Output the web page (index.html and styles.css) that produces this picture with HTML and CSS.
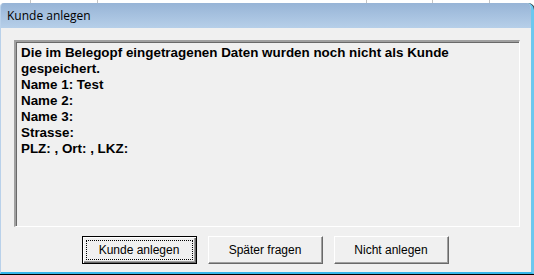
FILE: index.html
```html
<!DOCTYPE html>
<html lang="de">
<head>
<meta charset="utf-8">
<link rel="stylesheet" href="styles.css">
</head>
<body>
<div class="window">
  <div class="titlebar"><span class="title">Kunde anlegen</span></div>
  <div class="client">
    <div class="panel">
      <p class="msg">Die im Belegopf eingetragenen Daten wurden noch nicht als Kunde gespeichert.<br>Name 1: Test<br>Name 2:<br>Name 3:<br>Strasse:<br>PLZ: , Ort: , LKZ:</p>
    </div>
    <div class="buttons">
      <button class="btn default"><span class="focus">Kunde anlegen</span></button>
      <button class="btn">Später fragen</button>
      <button class="btn">Nicht anlegen</button>
    </div>
  </div>
</div>
</body>
</html>
```
FILE: styles.css
```css
html, body {
  margin: 0;
  padding: 0;
}
body {
  width: 534px;
  height: 275px;
  background-color: #000;
  background-image:
    linear-gradient(90deg, transparent 30px, #c4c4c4 30px, #c4c4c4 31px, transparent 31px,
      transparent 97px, #c4c4c4 97px, #c4c4c4 98px, transparent 98px,
      transparent 366px, #c4c4c4 366px, #c4c4c4 367px, transparent 367px,
      transparent 432px, #c4c4c4 432px, #c4c4c4 433px, transparent 433px,
      transparent 489px, #c4c4c4 489px, #c4c4c4 490px, transparent 490px),
    linear-gradient(#fff, #fff);
  background-size: 100% 4px, 100% 272px;
  background-repeat: no-repeat;
  overflow: hidden;
  font-family: "Liberation Sans", Arial, sans-serif;
}
.window {
  margin-top: 3px;
  width: 530px;
  height: 269px;
  border-left: 1px solid #b9d1ea;
  border-right: 3px solid #6dc8ef;
  border-bottom: 2px solid #35b6ea;
  border-top-right-radius: 7px;
  border-top-left-radius: 4px;
  box-shadow: 1px 0 0 #2b2b2b;
  display: flex;
  flex-direction: column;
  background: #f0f0f0;
  overflow: hidden;
}
.titlebar {
  height: 25px;
  flex: none;
  background: linear-gradient(#97b4d6, #b6cfe9);
  display: flex;
  align-items: center;
  padding-left: 6px;
}
.title {
  font-family: "Open Sans", "Segoe UI", sans-serif;
  font-size: 12px;
  color: #000;
  margin-top: -1px;
}
.client {
  flex: 1;
  padding: 12px 11px 0 13px;
  display: flex;
  flex-direction: column;
}
.panel {
  height: 187px;
  box-sizing: border-box;
  border-top: 2px solid;
  border-left: 2px solid;
  border-color: #a0a0a0 #fff #fff #a0a0a0;
  border-right: 1px solid #fff;
  border-bottom: 1px solid #fff;
  box-shadow: inset 1px 1px 0 #696969;
  padding: 3px 5px;
}
.msg {
  margin: 0;
  font-weight: bold;
  font-size: 13.4px;
  line-height: 16px;
  color: #000;
}
.buttons {
  display: flex;
  justify-content: center;
  gap: 11px;
  margin-top: 9px;
  padding-right: 4px;
}
.btn {
  width: 115px;
  height: 28px;
  box-sizing: border-box;
  font-family: "Liberation Sans", Arial, sans-serif;
  font-size: 12px;
  color: #000;
  background: #f0f0f0;
  border: 1px solid;
  border-color: #fff #696969 #696969 #fff;
  box-shadow: inset -1px -1px 0 #a0a0a0;
  padding: 0;
  display: flex;
  align-items: center;
  justify-content: center;
}
.btn.default {
  border: 1px solid #000;
  box-shadow: inset 1px 1px 0 #fff, inset -1px -1px 0 #696969, inset -2px -2px 0 #a0a0a0;
  padding: 3px;
}
.focus {
  flex: 1;
  align-self: stretch;
  display: flex;
  align-items: center;
  justify-content: center;
  border: 1px dotted #000;
}
```
